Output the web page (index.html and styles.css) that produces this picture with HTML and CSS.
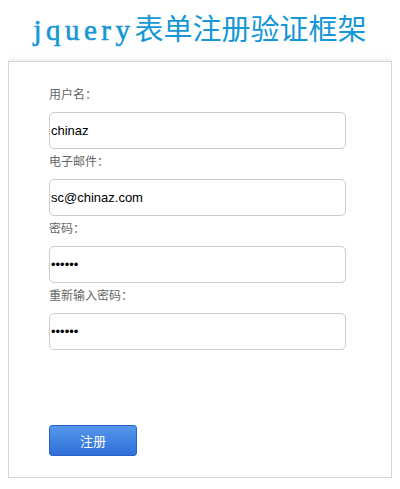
FILE: index.html
```html
<!DOCTYPE html>
<html lang="zh-CN">
<head>
    <meta charset="UTF-8">
    <meta name="viewport" content="width=device-width, initial-scale=1.0">
    <title>jquery表单注册验证框架</title>
    <link rel="stylesheet" href="styles.css">
</head>
<body>
    <!-- Title -->
    <h1 class="title"><span class="latin">jquery</span>表单注册验证框架</h1>

    <!-- Register Form -->
    <div class="form-box">
        <form class="reg-form" onsubmit="return false;">
            <div class="field">
                <label for="username">用户名：</label>
                <input type="text" id="username" value="chinaz">
            </div>
            <div class="field">
                <label for="email">电子邮件：</label>
                <input type="text" id="email" value="sc@chinaz.com">
            </div>
            <div class="field">
                <label for="password">密码：</label>
                <input type="password" id="password" value="123456">
            </div>
            <div class="field">
                <label for="repassword">重新输入密码：</label>
                <input type="password" id="repassword" value="123456">
            </div>
            <div class="actions">
                <button type="submit" class="btn-submit">注册</button>
            </div>
        </form>
    </div>
</body>
</html>
```

FILE: styles.css
```css
body {
    margin: 8px;
    background-color: #FFFFFF;
    font-family: "Liberation Sans", "Noto Sans CJK SC", sans-serif;
}

.title {
    margin: 0 0 8px;
    height: 45px;
    line-height: 45px;
    font-size: 29px;
    font-weight: normal;
    text-align: center;
    color: #1697D6;
    font-family: "Liberation Serif", "Noto Sans CJK SC", serif;
}

.title .latin {
    letter-spacing: 4.5px;
    -webkit-text-stroke: 0.6px #1697D6;
}

.form-box {
    background-color: #FFFFFF;
    border: 1px solid #D6D6D6;
    box-shadow: 0 0 6px rgba(0, 0, 0, 0.14);
    padding: 24px 40px 21px;
}

.field label {
    display: block;
    font-size: 12px;
    line-height: 18px;
    color: #666666;
    margin-bottom: 8px;
}

.field input {
    display: block;
    box-sizing: border-box;
    width: 297px;
    height: 37px;
    margin: 0 0 4px;
    padding: 0 1px;
    border: 1px solid #CCCCCC;
    border-radius: 5px;
    font-family: "Liberation Sans", sans-serif;
    font-size: 13px;
    color: #000000;
    outline: none;
}

.actions {
    padding-top: 71px;
}

.btn-submit {
    width: 88px;
    height: 31px;
    border: 1px solid #2A62C9;
    border-radius: 3px;
    background: linear-gradient(#5597EB, #2D6FD8);
    color: #FFFFFF;
    font-family: "Liberation Sans", "Noto Sans CJK SC", sans-serif;
    font-size: 13px;
    cursor: pointer;
}
```
